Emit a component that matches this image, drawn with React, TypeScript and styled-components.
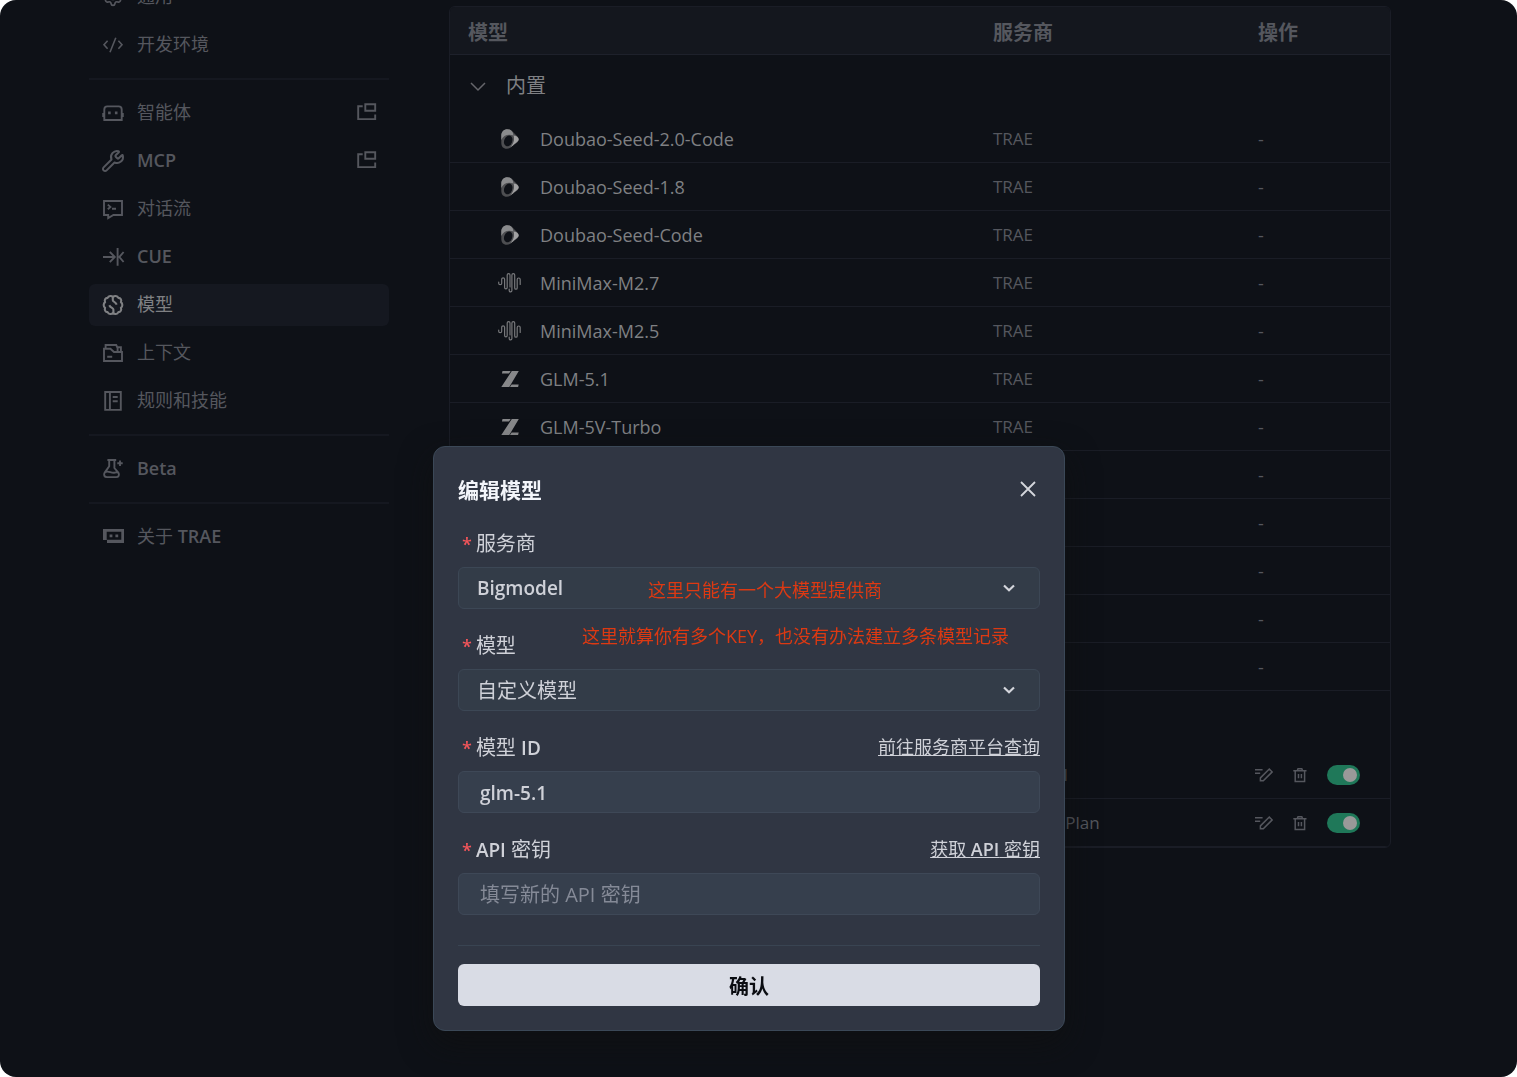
import React, { useState } from "react";
import styled, { createGlobalStyle } from "styled-components";
import { Settings, Wrench } from "lucide-react";

const color = {
  page: "#0e1117",
  raised: "#14171e",
  line: "#1a1d26",
  muted: "#55575e",
  text: "#7f8083",
  dialog: "#303643",
  dialogLine: "#3b4857",
  dialogText: "#cfd1d8",
  note: "#dd3912",
};

const GlobalStyle = createGlobalStyle`
  * { box-sizing: border-box; }
  body {
    margin: 0;
    background: #ffffff;
    font-family: "Open Sans", "Noto Sans", "Noto Sans CJK SC", sans-serif;
  }
  button, input, select { font-family: inherit; }
`;

const Page = styled.div`
  min-height: 100vh;
  display: grid;
  grid-template-columns: 300px minmax(0, 1fr);
  align-items: start;
  gap: 60px;
  padding: 0 126px 0 89px;
  overflow: hidden;
  border-radius: 16px;
  background: ${color.page};
  color: ${color.muted};
`;

/* ---------- sidebar ---------- */

const Sidebar = styled.nav`
  margin-top: -24px;
  display: flex;
  flex-direction: column;
`;

const NavGroup = styled.div`
  display: flex;
  flex-direction: column;
  gap: 6px;

  & + & {
    margin-top: 12px;
    padding-top: 12px;
    border-top: 2px solid #151820;
  }
`;

const NavItem = styled.a<{ $active?: boolean }>`
  display: flex;
  align-items: center;
  gap: 14px;
  height: 42px;
  padding: 0 12px 0 14px;
  border-radius: 6px;
  font-size: 18px;
  line-height: 24px;
  text-decoration: none;
  background: ${(p) => (p.$active ? "#151820" : "transparent")};
  color: ${(p) => (p.$active ? color.text : color.muted)};

  svg {
    flex: none;
  }
`;

const NavLabel = styled.span`
  flex: 1;
  padding-bottom: 2px;
`;

const Latin = styled.span`
  font-weight: 600;
`;

const ToolIcon = styled(Wrench)`
  margin: 0 -2px;
`;

const NavIcon = ({ children }: { children: React.ReactNode }) => (
  <svg width="20" height="20" viewBox="0 0 20 20" fill="none" stroke="currentColor" strokeWidth="1.9" overflow="visible" aria-hidden="true">
    {children}
  </svg>
);

const CodeIcon = () => (
  <NavIcon>
    <path d="M4.6 5.8 1 9.8l3.6 4M15.4 5.8l3.6 4-3.6 4M12.8 2.7 7 17.3" strokeWidth="1.6" />
  </NavIcon>
);
const RobotIcon = () => (
  <NavIcon>
    <path d="M1.3 17V6.4a3 3 0 0 1 3-3h11.4a3 3 0 0 1 3 3V17z" />
    <path d="M.2 10v4M19.8 10v4" />
    <path d="M6.4 8.4v2.8M13.2 8.4v2.8" strokeWidth="2.6" />
  </NavIcon>
);
const ChatIcon = () => (
  <NavIcon>
    <path d="M1 2h18v14h-8.600L5.200 19v-3H1z" />
    <path d="m4.800 5.600 2.600 2.300-2.600 2.300M9 9.800h4" />
  </NavIcon>
);
const CueIcon = () => (
  <NavIcon>
    <path d="M0 10h11.5M6.8 4.8 11.8 10l-5 5.2M14.6 1v17.8M20.6 5 16.4 10l4.2 5" />
  </NavIcon>
);
const ModelIcon = () => (
  <NavIcon>
    <path
      d="M10 2C8.6.4 5.600.6 4.600 2.900 2.200 3 1.200 5.300 2.100 7.100.2 8.500.2 11.500 2.100 12.900 1.200 14.900 2.400 17 4.600 17.100 5.600 19.400 8.600 19.600 10 18c1.400 1.600 4.400 1.400 5.400-.9 2.200-.1 3.400-2.200 2.500-4.200 1.900-1.400 1.900-4.400 0-5.800.9-1.800-.1-4.100-2.500-4.200C14.400.6 11.400.4 10 2z"
      strokeWidth="2.1"
      strokeLinejoin="round"
    />
    <path d="M9.800 2v3.200c0 1.300 2.600 1.700 3.900 4.400M10.400 18v-3.600c0-1.400-2.900-1.500-4.100-4.200" strokeWidth="2.1" />
  </NavIcon>
);
const FolderIcon = () => (
  <NavIcon>
    <path d="M1 5.700h6.400l3.600 3.300h8v9H1zM2.600 5.700V2h10.600l1.400 3M14.600 8.800V4.200h3.300v4.600M4.200 13.700h5" />
  </NavIcon>
);
const BookIcon = () => (
  <NavIcon>
    <path d="M2.200 1h15.600v17.900H2.200zM6.900 1v17.900M9.700 6h5M9.700 10.300h5" />
  </NavIcon>
);
const FlaskIcon = () => (
  <NavIcon>
    <path d="M4.400 1h8.800M6.200 1v6.200L1.700 13.600c-1.400 2.400-.3 4.500 2.200 4.500h9.200c2.500 0 3.700-2.100 2.200-4.500L11.400 9V1M2 13.200c3.600-2.200 6.200 1.600 9.800.4 1.200-.4 2.200-.4 3.400 0" />
    <path d="M17 1.600v5.400M14.300 4.300h5.400" />
  </NavIcon>
);
const TraeIcon = () => (
  <NavIcon>
    <path d="M3.700 2H21v14H4v-3H0V2zM3.700 4.800v8h14.600v-8z" fill="currentColor" fillRule="evenodd" stroke="none" />
    <path d="M6.600 8.900h2.800M12.400 8.900h2.800" strokeWidth="2.800" />
  </NavIcon>
);
const PopOutIcon = () => (
  <NavIcon>
    <path d="M5.700 3.200H1.200v12.900h17v-4.500M8.300 1.200h9.900v6.600H8.300z" />
  </NavIcon>
);

/* ---------- model table ---------- */

const TableFrame = styled.main`
  margin-top: 6px;
  overflow: hidden;
  border: 1px solid ${color.line};
  border-radius: 6px;
`;

const Table = styled.table`
  width: 100%;
  table-layout: fixed;
  border-spacing: 0;
  font-size: 18px;
  line-height: 24px;
`;

const Head = styled.th<{ $width?: number }>`
  width: ${(p) => (p.$width ? `${p.$width}px` : "auto")};
  height: 48px;
  padding: 4px 18px 0;
  border-bottom: 1px solid #1e212b;
  background: ${color.raised};
  font-size: 20px;
  font-weight: 700;
  text-align: left;
`;

const GroupCell = styled.td`
  height: 60px;
  padding: 2px 18px 0;
`;

const GroupButton = styled.button`
  display: flex;
  align-items: center;
  gap: 18px;
  padding: 0;
  border: 0;
  background: none;
  color: ${color.text};
  font-size: 20px;
  line-height: 24px;
`;

const Cell = styled.td`
  height: 48px;
  padding: 0 18px;
  border-bottom: 1px solid ${color.line};
  white-space: nowrap;
`;

const ProviderCell = styled(Cell)`
  font-size: 17px;
`;

const NameCell = styled(Cell)`
  padding-left: 48px;
  color: ${color.text};
`;

const Name = styled.div`
  display: flex;
  align-items: center;
  gap: 18px;
`;

const ActionCell = styled(Cell)`
  padding-left: 15px;
`;

const Actions = styled.div`
  display: flex;
  align-items: center;
  gap: 18px;
`;

const IconButton = styled.button`
  display: flex;
  padding: 0;
  border: 0;
  background: none;
  color: inherit;
`;

const Switch = styled.input`
  appearance: none;
  display: flex;
  align-items: center;
  justify-content: flex-end;
  width: 33px;
  height: 20px;
  margin: 0;
  padding: 3px;
  border-radius: 10px;
  background: #1f7859;

  &::before {
    content: "";
    width: 14px;
    height: 14px;
    border-radius: 50%;
    background: #999999;
  }

  &:not(:checked) {
    justify-content: flex-start;
    background: #30343c;
  }
`;

const LogoSvg = ({ children }: { children: React.ReactNode }) => (
  <svg width="24" height="24" viewBox="0 0 24 24" fill="none" aria-hidden="true">
    {children}
  </svg>
);

const DoubaoLogo = () => (
  <LogoSvg>
    <path d="M3.300 9C3.300 5 5.800 2.300 9.400 2.300c3 0 4.800 1.600 6.800 3.900 3 3.300 5.300 4.600 4.300 7.400-1 2.600-4 3.500-6.100 5.500-1.700 1.600-3.200 2.600-5.700 2.600-3.500 0-5.400-2.200-5.400-6z" fill="#4d4e51" />
    <path d="M3.300 13V8.600C3.300 5 5.800 2.300 9.400 2.300c2.800 0 4.400 1.500 5.500 3.500l.6 2.600C10 6.500 5.300 8.200 3.300 13z" fill="#8a8b8d" />
    <path d="M15.600 8.400c2.400.2 4.800 1.600 5.100 3.500.2 2.700-3.500 4-5.700 6.500l-2.600 1.900c3-3.900 4.500-7 3.200-11.900z" fill="#a1a1a2" />
    <ellipse cx="10.200" cy="13.900" rx="4" ry="5.600" transform="rotate(22 10.200 13.900)" fill={color.page} />
  </LogoSvg>
);
const MiniMaxLogo = () => (
  <LogoSvg>
    <path
      d="M.7 11.200v1a1.500 1.500 0 0 0 3 0V8.300a1.450 1.450 0 0 1 2.900 0v8.200a1.300 1.300 0 0 0 2.600 0V4a1.400 1.400 0 0 1 2.800 0v12M11.200 18v1.500a1.300 1.300 0 0 0 2.700 0V4a1.400 1.400 0 0 1 2.800 0v12.900a1.250 1.250 0 0 0 2.500 0V8.500a1.500 1.500 0 0 1 3 0v5"
      stroke="#77787b"
      strokeWidth="1.200"
      strokeLinecap="round"
    />
  </LogoSvg>
);
const ZLogo = () => (
  <LogoSvg>
    <path d="M4.500 4h8.200l-1.700 2.500H3.900zM13.800 4h7L11.300 20h-8zM13.600 17.500h7.100l-.6 2.500H12z" fill="#87888a" />
  </LogoSvg>
);
const ChevronIcon = () => (
  <svg width="20" height="20" viewBox="0 0 20 20" fill="none" stroke="#65666b" strokeWidth="1.500" aria-hidden="true">
    <path d="m3 7 7 7 7-7" />
  </svg>
);
const EditIcon = () => (
  <svg width="18" height="18" viewBox="0 0 18 18" fill="none" stroke="currentColor" strokeWidth="1.500" aria-hidden="true">
    <path d="M0 3.800h7.600M0 7.200h5.200M5.400 11.900 14.300 3l2.900 2.900-8.900 8.900H5.400z" />
  </svg>
);
const TrashIcon = () => (
  <svg width="18" height="18" viewBox="0 0 18 18" fill="none" stroke="currentColor" strokeWidth="1.500" aria-hidden="true">
    <path d="M2.300 4.700h13.200M4.200 4.700v10.700h9.400V4.700M6.200 4.700l.8-2h3.800l.8 2M7.500 8v4.300M10.400 8v4.300" />
  </svg>
);

/* ---------- dialog ---------- */

const Overlay = styled.div`
  position: fixed;
  inset: 0;
  display: flex;
  justify-content: center;
  align-items: flex-start;
  padding: 446px 19px 0 0;
`;

const Dialog = styled.section`
  position: relative;
  width: 632px;
  padding: 24px;
  border: 1px solid ${color.dialogLine};
  border-radius: 12px;
  background: ${color.dialog};
  box-shadow: 0 12px 32px rgba(16, 16, 16, 0.7);
  color: ${color.dialogText};
`;

const DialogHeader = styled.header`
  display: flex;
  align-items: center;
  justify-content: space-between;
  height: 36px;
  margin-bottom: 20px;
`;

const Title = styled.h2`
  margin: 0;
  padding-top: 2px;
  font-size: 21px;
  line-height: 28px;
  font-weight: 700;
  color: #f3f5fa;
`;

const CloseButton = styled.button`
  display: flex;
  padding: 2px;
  border: 0;
  background: none;
  color: #d4d6dc;
`;

const Field = styled.div`
  margin-bottom: 20px;
`;

const LabelRow = styled.div`
  display: flex;
  align-items: center;
  justify-content: space-between;
  height: 32px;
  margin-bottom: 8px;
`;

const Label = styled.label`
  display: flex;
  gap: 4px;
  padding: 2px 0 0 4px;
  font-size: 20px;
  line-height: 28px;
`;

const Required = styled.span`
  font-size: 18px;
  font-weight: 600;
  color: #f2555a;
`;

const LabelLatin = styled.span`
  font-size: 19px;
  font-weight: 600;
`;

const Link = styled.a`
  font-size: 18px;
  line-height: 24px;
  color: ${color.dialogText};
  text-decoration: underline;
`;

const SelectBox = styled.div`
  display: grid;
  align-items: center;

  > * {
    grid-area: 1 / 1;
  }

  svg {
    justify-self: end;
    margin-right: 25px;
    pointer-events: none;
  }
`;

const Select = styled.select<{ $bold?: boolean }>`
  appearance: none;
  width: 100%;
  height: 42px;
  padding: 0 18px;
  border: 1px solid #3c4755;
  border-radius: 6px;
  background: #333c48;
  color: ${color.dialogText};
  font-size: ${(p) => (p.$bold ? 19 : 20)}px;
  font-weight: ${(p) => (p.$bold ? 600 : 400)};
`;

const TextInput = styled.input`
  width: 100%;
  height: 42px;
  padding: 2px 21px 0;
  border: 1px solid #3e4857;
  border-radius: 6px;
  background: #363f4d;
  color: ${color.dialogText};
  font-size: 19px;
  font-weight: 600;

  &::placeholder {
    color: #858a97;
    font-size: 20px;
    font-weight: 400;
  }
`;

const Footer = styled.footer`
  margin-top: 30px;
  padding-top: 18px;
  border-top: 1px solid #394452;
`;

const Confirm = styled.button`
  display: block;
  width: 100%;
  height: 42px;
  border: 0;
  border-radius: 6px;
  background: #d9dce5;
  color: #0b0d12;
  font-size: 20px;
  font-weight: 700;
`;

const Note = styled.span<{ $left: number; $top: number }>`
  position: absolute;
  left: ${(p) => p.$left}px;
  top: ${(p) => p.$top}px;
  font-size: 18px;
  line-height: 24px;
  white-space: nowrap;
  color: ${color.note};
  pointer-events: none;
`;

const DropIcon = () => (
  <svg width="12" height="12" viewBox="0 0 12 12" fill="none" stroke="#d4d6dc" strokeWidth="2.200" aria-hidden="true">
    <path d="m1 3.500 5 4.700 5-4.700" />
  </svg>
);

/* ---------- data ---------- */

const builtIn = [
  { name: "Doubao-Seed-2.0-Code", Logo: DoubaoLogo },
  { name: "Doubao-Seed-1.8", Logo: DoubaoLogo },
  { name: "Doubao-Seed-Code", Logo: DoubaoLogo },
  { name: "MiniMax-M2.7", Logo: MiniMaxLogo },
  { name: "MiniMax-M2.5", Logo: MiniMaxLogo },
  { name: "GLM-5.1", Logo: ZLogo },
  { name: "GLM-5V-Turbo", Logo: ZLogo },
  { name: "GLM-5", Logo: ZLogo },
  { name: "GLM-4.7", Logo: ZLogo },
  { name: "GLM-4.6", Logo: ZLogo },
  { name: "MiniMax-M2.1", Logo: MiniMaxLogo },
  { name: "MiniMax-M2", Logo: MiniMaxLogo },
];

const custom = [
  { name: "glm-5.1", provider: "Bigmodel" },
  { name: "MiniMax-M2.7", provider: "MiniMax Plan" },
];

const RequiredMark = () => <Required aria-hidden="true">*</Required>;

function ModelTable() {
  const [enabled, setEnabled] = useState([true, true]);
  return (
    <TableFrame>
      <Table>
        <thead>
          <tr>
            <Head>模型</Head>
            <Head $width={265}>服务商</Head>
            <Head $width={150}>操作</Head>
          </tr>
        </thead>
        <tbody>
          <tr>
            <GroupCell colSpan={3}>
              <GroupButton><ChevronIcon />内置</GroupButton>
            </GroupCell>
          </tr>
          {builtIn.map(({ name, Logo }) => (
            <tr key={name}>
              <NameCell><Name><Logo />{name}</Name></NameCell>
              <ProviderCell>TRAE</ProviderCell>
              <Cell>-</Cell>
            </tr>
          ))}
          <tr>
            <GroupCell colSpan={3}>
              <GroupButton><ChevronIcon />自定义</GroupButton>
            </GroupCell>
          </tr>
          {custom.map(({ name, provider }, i) => (
            <tr key={name}>
              <NameCell><Name><ZLogo />{name}</Name></NameCell>
              <ProviderCell>{provider}</ProviderCell>
              <ActionCell>
                <Actions>
                  <IconButton aria-label="编辑"><EditIcon /></IconButton>
                  <IconButton aria-label="删除"><TrashIcon /></IconButton>
                  <Switch
                    type="checkbox"
                    role="switch"
                    aria-label="启用"
                    checked={enabled[i]}
                    onChange={() => setEnabled(enabled.map((on, k) => (k === i ? !on : on)))}
                  />
                </Actions>
              </ActionCell>
            </tr>
          ))}
        </tbody>
      </Table>
    </TableFrame>
  );
}

function EditDialog() {
  const [modelId, setModelId] = useState("glm-5.1");
  return (
    <Overlay>
      <Dialog role="dialog" aria-labelledby="dialog-title">
        <DialogHeader>
          <Title id="dialog-title">编辑模型</Title>
          <CloseButton aria-label="关闭">
            <svg width="20" height="20" viewBox="0 0 20 20" fill="none" stroke="currentColor" strokeWidth="1.800" aria-hidden="true">
              <path d="m3 3 14 14M17 3 3 17" />
            </svg>
          </CloseButton>
        </DialogHeader>

        <Field>
          <LabelRow>
            <Label htmlFor="provider"><RequiredMark />服务商</Label>
          </LabelRow>
          <SelectBox>
            <Select id="provider" $bold>
              <option>Bigmodel</option>
            </Select>
            <DropIcon />
          </SelectBox>
        </Field>

        <Field>
          <LabelRow>
            <Label htmlFor="model"><RequiredMark />模型</Label>
          </LabelRow>
          <SelectBox>
            <Select id="model">
              <option>自定义模型</option>
            </Select>
            <DropIcon />
          </SelectBox>
        </Field>

        <Field>
          <LabelRow>
            <Label htmlFor="model-id"><RequiredMark /><span>模型 <LabelLatin>ID</LabelLatin></span></Label>
            <Link href="#models">前往服务商平台查询</Link>
          </LabelRow>
          <TextInput id="model-id" value={modelId} onChange={(e) => setModelId(e.target.value)} />
        </Field>

        <Field>
          <LabelRow>
            <Label htmlFor="api-key"><RequiredMark /><span><LabelLatin>API</LabelLatin> 密钥</span></Label>
            <Link href="#keys">获取 <Latin>API</Latin> 密钥</Link>
          </LabelRow>
          <TextInput id="api-key" placeholder="填写新的 API 密钥" />
        </Field>

        <Footer>
          <Confirm>确认</Confirm>
        </Footer>

        <Note $left={214} $top={131}>这里只能有一个大模型提供商</Note>
        <Note $left={148} $top={177}>这里就算你有多个KEY，也没有办法建立多条模型记录</Note>
      </Dialog>
    </Overlay>
  );
}

export default function App() {
  return (
    <>
      <GlobalStyle />
      <Page>
        <Sidebar>
          <NavGroup>
            <NavItem href="#general"><Settings size={20} strokeWidth={2} /><NavLabel>通用</NavLabel></NavItem>
            <NavItem href="#env"><CodeIcon /><NavLabel>开发环境</NavLabel></NavItem>
          </NavGroup>
          <NavGroup>
            <NavItem href="#agent"><RobotIcon /><NavLabel>智能体</NavLabel><PopOutIcon /></NavItem>
            <NavItem href="#mcp"><ToolIcon size={24} strokeWidth={2} /><NavLabel><Latin>MCP</Latin></NavLabel><PopOutIcon /></NavItem>
            <NavItem href="#chat"><ChatIcon /><NavLabel>对话流</NavLabel></NavItem>
            <NavItem href="#cue"><CueIcon /><NavLabel><Latin>CUE</Latin></NavLabel></NavItem>
            <NavItem href="#model-settings" $active aria-current="page"><ModelIcon /><NavLabel>模型</NavLabel></NavItem>
            <NavItem href="#context"><FolderIcon /><NavLabel>上下文</NavLabel></NavItem>
            <NavItem href="#rules"><BookIcon /><NavLabel>规则和技能</NavLabel></NavItem>
          </NavGroup>
          <NavGroup>
            <NavItem href="#beta"><FlaskIcon /><NavLabel><Latin>Beta</Latin></NavLabel></NavItem>
          </NavGroup>
          <NavGroup>
            <NavItem href="#about"><TraeIcon /><NavLabel>关于 <Latin>TRAE</Latin></NavLabel></NavItem>
          </NavGroup>
        </Sidebar>
        <ModelTable />
      </Page>
      <EditDialog />
    </>
  );
}
